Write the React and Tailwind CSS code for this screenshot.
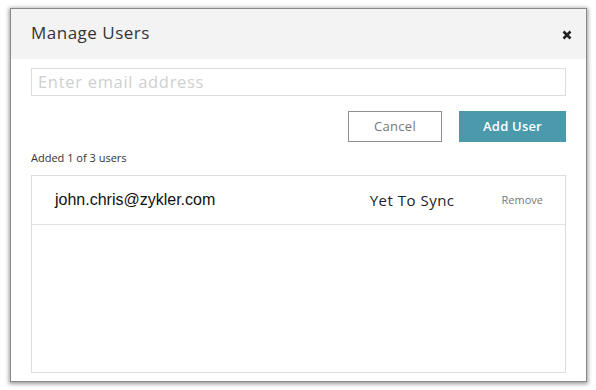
export default function App() {
  return (
    <div className="w-[596px] h-[390px] bg-white pt-[8px] pl-[10px] pr-[9px] pb-[8px]" style={{ fontFamily: '"Open Sans", "Liberation Sans", sans-serif' }}>
      <div className="w-full h-full border border-[#8a8a8a] bg-white shadow-[0_1px_4px_1px_rgba(0,0,0,0.4)] flex flex-col">
        <div className="h-[50px] bg-[#f3f3f3] flex items-center justify-between pl-[20px] pr-[14px]">
          <span className="text-[17px] text-[#333] tracking-[0.5px] -mt-[2px]">Manage Users</span>
          <svg width="10" height="10" viewBox="0 0 10 10" className="mt-[1px]">
            <path d="M1.5 1.5 L8.5 8.5 M8.5 1.5 L1.5 8.5" stroke="#222" strokeWidth="2.6" strokeLinecap="butt" />
          </svg>
        </div>
        <div className="flex-1 flex flex-col px-[20px] pt-[9px] pb-[8px]">
          <div className="h-[28px] border border-[#dcdcdc] flex items-center px-[6px]">
            <span className="text-[16.5px] text-[#cfcfcf] tracking-[0.7px]">Enter email address</span>
          </div>
          <div className="flex justify-end gap-[17px] mt-[15px]">
            <div className="w-[94px] h-[31px] border border-[#8f8f8f] flex items-center justify-center text-[13px] text-[#777] tracking-[0.3px]">Cancel</div>
            <div className="w-[107px] h-[31px] bg-[#4a9aab] flex items-center justify-center text-[13px] font-semibold text-white tracking-[0.2px]">Add User</div>
          </div>
          <div className="text-[11px] text-[#333] mt-[9px] leading-[14px]">Added 1 of 3 users</div>
          <div className="flex-1 border border-[#dedede] mt-[10px] flex flex-col">
            <div className="h-[49px] border-b border-[#e2e2e2] flex items-center pl-[23px] pr-[22px]">
              <span className="text-[16px] text-[#111] flex-1" style={{ fontFamily: '"Liberation Sans", Arial, sans-serif' }}>john.chris@zykler.com</span>
              <span className="text-[15px] text-[#222] mr-[47px] tracking-[0.5px]">Yet To Sync</span>
              <span className="text-[11px] text-[#777]">Remove</span>
            </div>
          </div>
        </div>
      </div>
    </div>
  );
}
